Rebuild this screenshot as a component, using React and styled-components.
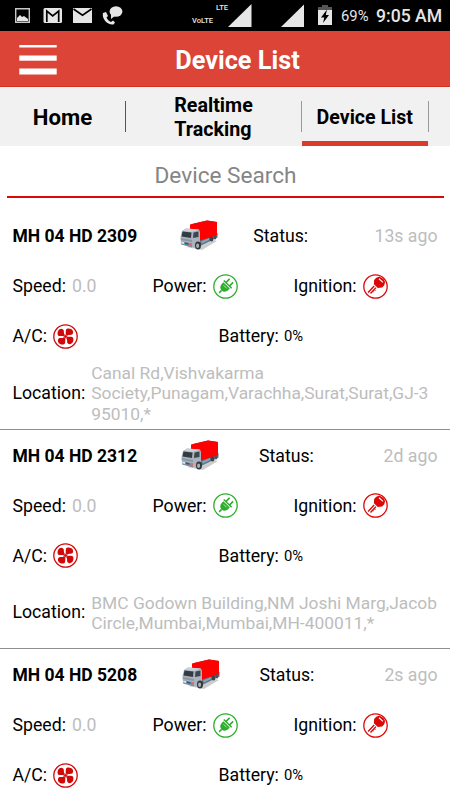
import React from 'react';
import styled, { createGlobalStyle } from 'styled-components';

const GlobalStyle = createGlobalStyle`
  * {
    box-sizing: border-box;
  }

  body {
    margin: 0;
    overflow: hidden;
    background: #ffffff;
    font-family: Roboto, 'Liberation Sans', sans-serif;
    color: #000000;
  }

  svg {
    display: block;
    flex-shrink: 0;
  }
`;

const Screen = styled.div`
  width: 450px;
  height: 800px;
  overflow: hidden;
`;

const StatusBar = styled.div`
  display: flex;
  align-items: flex-start;
  height: 31px;
  padding-left: 15px;

  color: #e6e6e6;

  background: #000000;
`;

const Notifications = styled.div`
  display: flex;
  width: 177px;
`;

const NetworkLabel = styled.span`
  width: ${({ $width }) => $width}px;
  padding-top: ${({ $top }) => $top}px;

  font-weight: 500;
  font-size: 7.6px;
  line-height: 8px;
  white-space: nowrap;
`;

const Signals = styled.div`
  display: flex;
  gap: 29px;
  width: 90px;
  padding-top: 4px;
`;

const Percent = styled.span`
  width: 35px;
  padding-left: 9px;

  font-size: 14.8px;
  line-height: 33px;
`;

const Clock = styled.span`
  padding-left: 9px;

  font-weight: 500;
  font-size: 17.6px;
  line-height: 33px;
  white-space: nowrap;
`;

const Header = styled.header`
  display: grid;
  grid-template-columns: 75px 1fr 50px;
  align-items: center;
  height: 56px;

  background: #db4437;
  border-bottom: 1px solid #d62f1d;
`;

const MenuButton = styled.button`
  display: block;
  margin: 2px 0 0 19px;
  padding: 0;

  background: none;
  border: none;
  cursor: pointer;
`;

const Title = styled.h1`
  margin: 5px 0 0;

  font-weight: 700;
  font-size: 25.3px;
  line-height: 30px;
  text-align: center;
  white-space: nowrap;

  color: #ffffff;
`;

const Tabs = styled.nav`
  display: flex;
  align-items: flex-start;
  height: 59px;

  background: #f1f1f1;
`;

const Tab = styled.div`
  display: flex;
  align-items: center;
  justify-content: center;
  width: ${({ $width }) => $width}px;
  height: 59px;
  padding-top: ${({ $top }) => $top}px;

  font-weight: 700;
  font-size: ${({ $size }) => $size}px;
  line-height: 24px;
  white-space: pre-line;

  border-bottom: ${({ $active }) => ($active ? '5px solid #db3a2c' : 'none')};
`;

const Divider = styled.div`
  width: 1px;
  height: 31px;
  margin-top: 14px;

  background: ${({ $dark }) => ($dark ? '#555555' : '#999999')};
`;

const Search = styled.input`
  display: block;
  width: 437px;
  height: 52px;
  margin: 0 auto 12px 7px;
  padding: 9px 0 0;

  font-family: inherit;
  font-size: 22.6px;
  text-align: center;

  background: none;
  border: none;
  border-bottom: 2px solid #db0808;
  outline: none;

  &::placeholder {
    color: #858585;
    opacity: 1;
  }
`;

const Card = styled.section`
  height: 219.5px;
  padding: 0 12.5px;

  font-size: 17.7px;

  border-bottom: 1px solid #909090;
`;

const Summary = styled.div`
  display: flex;
  align-items: center;
  height: 51px;
  padding-top: 1px;
  white-space: nowrap;
`;

const Name = styled.div`
  flex: 2 0 auto;
  padding-right: 41px;

  font-weight: 700;
  font-size: 17.5px;
`;

const Truck = styled.div`
  flex: 4 0 71px;
  padding-bottom: 1px;
`;

const Status = styled.div`
  flex: 3.5 0 auto;
  padding-right: 64px;
`;

const Muted = styled.span`
  color: #bdbdbd;
`;

const Metrics = styled.div`
  display: grid;
  grid-template-columns: ${({ $columns }) => $columns};
  align-items: center;
  height: 50px;
`;

const Metric = styled.div`
  display: flex;
  align-items: center;
  gap: 6px;
  white-space: nowrap;
`;

const Level = styled.span`
  margin-left: -1px;

  font-size: 14.8px;
`;

const Location = styled.div`
  display: flex;
  align-items: center;
  gap: 6px;
  height: 64px;
  line-height: 20.5px;
`;

const Address = styled.div`
  padding-top: 1px;

  font-size: 17.4px;
  white-space: pre;

  color: #bdbdbd;
`;

const TruckIcon = () => (
  <svg width="38" height="31" viewBox="0 0 38 31">
    <path d="M6 27 22 30 37 21 30 19Z" fill="#b8b8b8" opacity=".7" />
    <path d="M15 22 37.5 13V17.5L20 26Z" fill="#58758a" />
    <path d="M10 4.5 27 .6 37 2V15.5L20 20.5 10 15Z" fill="#ff0000" />
    <path d="M10 4.5 27 .6 37 2 19 4.8Z" fill="#f30606" />
    <path d="M2 11 6 8.5 19 9.5 20 12V24L16 28 1 24.5.5 17Z" fill="#aab2bd" />
    <path d="M6 8.5 19 9.5 12 12 3 11Z" fill="#c9d0d7" />
    <path d="M2.5 11.5 11.5 12.5 11 18 1.5 16.5Z" fill="#333b42" />
    <path d="M13.5 12.5 18.5 11.5V17L13 18Z" fill="#3d454d" />
    <path d="M1 18 12 20V22L.8 20Z" fill="#8b97a3" />
    <path d="M1 21 12 23.5V27.5L1.5 24.5Z" fill="#7f90a0" />
    <path d="M1 21.5 4 22V24L1.3 23.3Z" fill="#d9e5ee" />
    <path d="M9.5 23 12 23.5V25.5L9.5 25Z" fill="#ef665b" />
    <path d="M5 22.5 8.5 23.3V24.7L5 24Z" fill="#245690" />
    <ellipse cx="18" cy="25.5" rx="3" ry="4" fill="#30363c" />
    <ellipse cx="17.6" cy="25.7" rx="1.5" ry="2.3" fill="#aab1b7" />
    <ellipse cx="31.5" cy="19" rx="1.8" ry="2.6" fill="#3c444b" />
    <ellipse cx="35" cy="17.2" rx="1.4" ry="2.3" fill="#48525a" />
    <path d="M21 21.5 29 18V20L22 23.5Z" fill="#8ba2b3" />
  </svg>
);

const PlugIcon = () => (
  <svg width="25" height="25" viewBox="0 0 25 25" fill="none" stroke="#2fad2f">
    <circle cx="12.5" cy="12.5" r="11.7" strokeWidth="1.3" />
    <g transform="rotate(45 12.5 12.5)">
      <path d="M8 11H17V13C17 16.2 15 18 12.5 18S8 16.2 8 13Z" fill="#2fad2f" stroke="none" />
      <path d="M7 9.4H18" strokeWidth="1.5" />
      <path d="M10 9.5V4.2M15 9.5V4.2M12.5 18V21.5" strokeWidth="1.5" />
      <path d="M10.4 13H14.6" stroke="#ffffff" strokeWidth=".6" />
    </g>
  </svg>
);

const KeyIcon = () => (
  <svg width="25" height="25" viewBox="0 0 25 25" fill="none" stroke="#dc0808">
    <circle cx="12.5" cy="12.5" r="11.7" strokeWidth="1.3" />
    <g transform="rotate(43 12.5 12.5)">
      <path
        d="M8.6 2.6Q12.5 1 16.4 2.6L18 5.5V8.6L15.2 12H9.8L7 8.6V5.5ZM9.8 3.9V5H15.2V3.9Z"
        fill="#dc0808"
        fillRule="evenodd"
        stroke="none"
      />
      <path d="M11.2 13V22M13.6 13V21" strokeWidth="1.4" />
      <path d="M13.8 15.5H15.2M13.8 18H14.8" strokeWidth="1" />
    </g>
  </svg>
);

const FanIcon = () => (
  <svg width="25" height="25" viewBox="0 0 25 25" fill="#cf0808">
    <circle cx="12.5" cy="12.5" r="11.7" fill="none" stroke="#cf0808" strokeWidth="1.3" />
    {[0, 90, 180, 270].map((angle) => (
      <path
        key={angle}
        d="M12.5 12.5C12.9 10.2 12.5 7.5 13 5.8C13.5 4.3 16.2 4.2 18 5.1C20.2 6.3 20.7 8.6 19.6 10.1C18.7 11.3 16.7 10.7 15.4 11C14.5 11.3 13.8 12 13.2 12.8Z"
        transform={`rotate(${angle} 12.5 12.5)`}
      />
    ))}
    <circle cx="12.5" cy="12.5" r="1.6" stroke="#f0a0a0" strokeWidth=".5" />
  </svg>
);

const NotificationIcons = () => (
  <svg width="109" height="31" viewBox="0 0 109 31" fill="#e6e6e6">
    <path d="M.7 8.7H14.3V22.3H.7Z" fill="none" stroke="#c8c8c8" strokeWidth="1.4" />
    <path d="M2 18 5 15 7 17 9 16 13 19V21H2Z" />
    <rect x="28.5" y="8" width="18.5" height="15" rx="1.5" />
    <path d="M31.8 22V11L37.7 16 43.7 11V22" fill="none" stroke="#000000" strokeWidth="1.7" />
    <path d="M58 8H77V23H58Z" />
    <path d="M58.5 9 67.5 15.2 76.5 9" fill="none" stroke="#000000" strokeWidth="1.6" />
    <ellipse cx="101" cy="11.5" rx="6.4" ry="5.2" />
    <path d="M96 14V19L101 15ZM88 13 91 12 93 16 91.5 17.5C92.5 19.5 94 21 96 22L98 20.5 100 22.5 98.5 24.5C93 25.5 86.5 19 88 13Z" />
  </svg>
);

const SignalIcon = () => (
  <svg width="23.5" height="23" viewBox="0 0 23.5 23">
    <path d="M0 23 23.5 0V23Z" fill="#e6e6e6" />
  </svg>
);

const BatteryIcon = () => (
  <svg width="14" height="25" viewBox="0 0 14 25">
    <path d="M4 5H10V7H14V11H0V7H4Z" fill="#555555" />
    <path d="M0 10H14V25H0Z" fill="#e6e6e6" />
    <path d="M9 9.5 3 17.5H6.3L5 23 11 15H7.8Z" fill="#000000" />
  </svg>
);

const MenuIcon = () => (
  <svg width="38" height="30" viewBox="0 0 38 30" fill="#ffffff">
    <rect x=".3" width="37.4" height="2.5" />
    <rect x=".3" y="10.5" width="37.4" height="5.2" />
    <rect x=".3" y="23.5" width="37.4" height="6" />
  </svg>
);

const devices = [
  {
    name: 'MH 04 HD 2309',
    updated: '13s ago',
    address: 'Canal Rd,Vishvakarma\nSociety,Punagam,Varachha,Surat,Surat,GJ-3\n95010,*',
  },
  {
    name: 'MH 04 HD 2312',
    updated: '2d ago',
    address: 'BMC Godown Building,NM Joshi Marg,Jacob\nCircle,Mumbai,Mumbai,MH-400011,*',
  },
  { name: 'MH 04 HD 5208', updated: '2s ago' },
];

function Device({ device }) {
  return (
    <Card>
      <Summary>
        <Name>{device.name}</Name>
        <Truck>
          <TruckIcon />
        </Truck>
        <Status>Status:</Status>
        <Muted>{device.updated}</Muted>
      </Summary>
      <Metrics $columns="140px 141px 1fr">
        <Metric>
          Speed: <Muted>0.0</Muted>
        </Metric>
        <Metric>
          Power: <PlugIcon />
        </Metric>
        <Metric>
          Ignition: <KeyIcon />
        </Metric>
      </Metrics>
      <Metrics $columns="206px 1fr">
        <Metric>
          A/C: <FanIcon />
        </Metric>
        <Metric>
          Battery: <Level>0%</Level>
        </Metric>
      </Metrics>
      {device.address && (
        <Location>
          Location: <Address>{device.address}</Address>
        </Location>
      )}
    </Card>
  );
}

export default function App() {
  return (
    <Screen>
      <GlobalStyle />
      <StatusBar>
        <Notifications>
          <NotificationIcons />
        </Notifications>
        <NetworkLabel $width={24} $top={17}>VoLTE</NetworkLabel>
        <NetworkLabel $width={12} $top={4}>LTE</NetworkLabel>
        <Signals>
          <SignalIcon />
          <SignalIcon />
        </Signals>
        <BatteryIcon />
        <Percent>69%</Percent>
        <Clock>9:05 AM</Clock>
      </StatusBar>
      <Header>
        <MenuButton aria-label="Menu">
          <MenuIcon />
        </MenuButton>
        <Title>Device List</Title>
      </Header>
      <Tabs>
        <Tab $width={125} $size={22.2} $top={1}>Home</Tab>
        <Divider $dark />
        <Tab $width={175} $size={19.7} $top={3}>{'Realtime\nTracking'}</Tab>
        <Divider />
        <Tab $width={125.5} $size={19.6} $top={7} $active>Device List</Tab>
        <Divider />
      </Tabs>
      <Search placeholder="Device Search" />
      {devices.map((device) => (
        <Device key={device.name} device={device} />
      ))}
    </Screen>
  );
}
